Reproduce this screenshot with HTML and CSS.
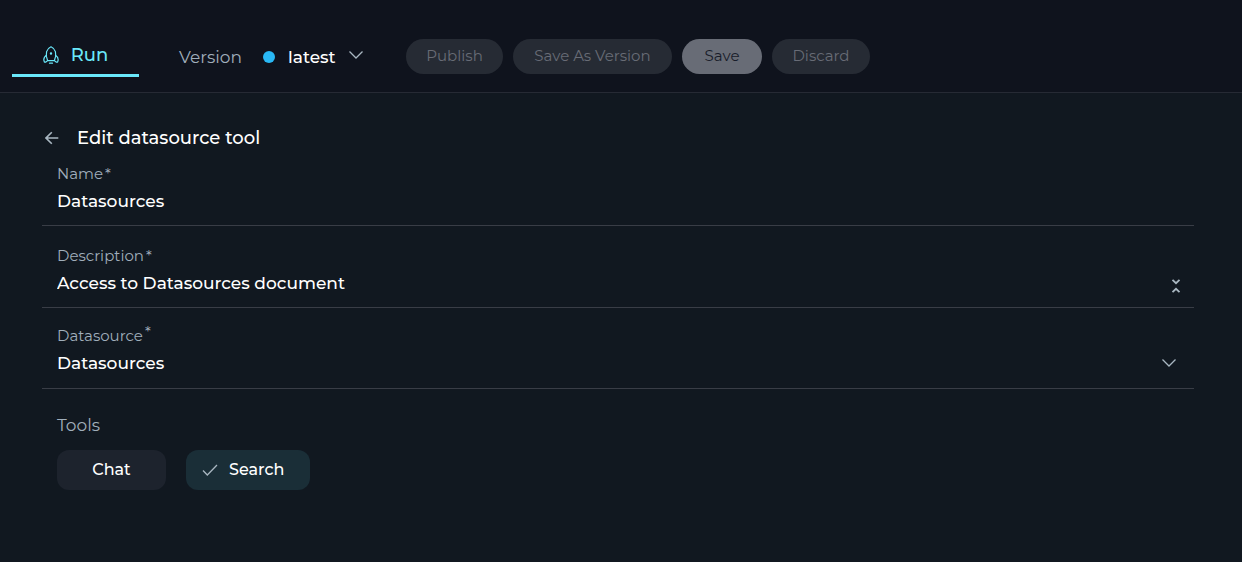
FILE: index.html
```html
<!DOCTYPE html>
<html lang="en">
<head>
<meta charset="utf-8">
<meta name="viewport" content="width=device-width, initial-scale=1">
<title>Edit datasource tool</title>
<link rel="stylesheet" href="styles.css">
</head>
<body>
<header class="topbar">
  <button class="tab" type="button" aria-current="page">
    <svg class="rocket" width="16" height="18" viewBox="0 0 16 18" fill="none" stroke="currentColor" stroke-width="1.2" stroke-linecap="round" stroke-linejoin="round" aria-hidden="true">
      <path d="M4.600 14.600C3.200 11.500 2.800 8.600 3.600 5.700 4.300 3.400 5.800 1.600 8 .7c2.200.9 3.700 2.700 4.400 5 .8 2.900.4 5.800-1 8.900z"/>
      <path d="M3.500 9.300C1.800 10.300.8 11.900.8 13.800l.6 2.400h1.200l2-1.600M12.500 9.300c1.700 1 2.700 2.600 2.700 4.500l-.6 2.400h-1.200l-2-1.600"/>
      <circle cx="8" cy="7.500" r=".6"/>
      <path d="M6.500 17.200h3"/>
    </svg>
    Run
  </button>
  <label class="version-label" for="version">Version</label>
  <span class="status-dot"></span>
  <div class="version-picker">
    <select id="version" class="version"><option>latest</option></select>
    <svg class="chevron" width="16" height="10" viewBox="0 0 16 10" aria-hidden="true"><path d="M1.500 1.500 8 8l6.500-6.500"/></svg>
  </div>
  <div class="actions">
    <button class="pill publish" type="button" disabled>Publish</button>
    <button class="pill save-as" type="button" disabled>Save As Version</button>
    <button class="pill save" type="button" disabled>Save</button>
    <button class="pill discard" type="button" disabled>Discard</button>
  </div>
</header>
<main class="content">
  <div class="heading">
    <button class="back" type="button" aria-label="Back">
      <svg width="14" height="14" viewBox="0 0 14 14" aria-hidden="true"><path d="M13.300 7H1M6.800 1.200 1 7l5.800 5.800"/></svg>
    </button>
    <h1 class="title">Edit datasource tool</h1>
  </div>
  <form class="form">
    <div class="field first">
      <label class="label" for="name">Name<span class="star">*</span></label>
      <input class="value" id="name" type="text" value="Datasources">
    </div>
    <div class="field">
      <label class="label" for="description">Description<span class="star">*</span></label>
      <div class="row">
        <textarea class="value" id="description" rows="1">Access to Datasources document</textarea>
        <button class="collapse" type="button" aria-label="Collapse">
          <svg width="10" height="14" viewBox="0 0 10 14" aria-hidden="true"><path d="M1.500.8 5 4.200 8.500.8M1.500 13.200 5 9.800l3.500 3.400"/></svg>
        </button>
      </div>
    </div>
    <div class="field last">
      <label class="label" for="datasource">Datasource<span class="star raised">*</span></label>
      <div class="row">
        <select class="value" id="datasource"><option>Datasources</option></select>
        <svg class="chevron" width="16" height="10" viewBox="0 0 16 10" aria-hidden="true"><path d="M1.500 1.500 8 8l6.500-6.500"/></svg>
      </div>
    </div>
    <section class="tools" aria-labelledby="tools-title">
      <h2 class="tools-title" id="tools-title">Tools</h2>
      <div class="chips">
        <button class="chip" type="button" aria-pressed="false">Chat</button>
        <button class="chip selected" type="button" aria-pressed="true">
          <svg width="16" height="12" viewBox="0 0 16 12" aria-hidden="true"><path d="M1 6.500 5.300 11 15 1"/></svg>
          Search
        </button>
      </div>
    </section>
  </form>
</main>
</body>
</html>
```
FILE: styles.css
```css
* {
  box-sizing: border-box;
}

body {
  margin: 0;
  min-height: 100vh;
  background: #111820;
  color: #fff;
  font: 500 17px/24px Montserrat, Inter, "Open Sans", sans-serif;
}

button,
input,
select,
textarea {
  margin: 0;
  padding: 0;
  border: 0;
  background: none;
  color: inherit;
  font: inherit;
  appearance: none;
}

svg {
  display: block;
  flex: none;
}

.topbar {
  display: flex;
  align-items: center;
  padding: 36px 12px 15px;
  border-bottom: 1px solid #262a34;
  background: #0f131d;
}

.tab {
  display: flex;
  align-items: center;
  justify-content: center;
  gap: 12px;
  width: 127px;
  height: 41px;
  border-bottom: 3px solid #6ae8fa;
  color: #6ae8fa;
  font-size: 18px;
}

.version-label {
  width: 64px;
  margin-left: 40px;
  color: #a0aebb;
  font-weight: 400;
}

.status-dot {
  width: 12px;
  height: 12px;
  margin: 0 13px 0 20px;
  border-radius: 50%;
  background: #29b8f5;
}

.version-picker {
  display: grid;
  align-items: center;
}

.version-picker > * {
  grid-area: 1 / 1;
}

.version {
  width: 76px;
  height: 24px;
}

.chevron {
  justify-self: end;
  pointer-events: none;
}

.version-picker .chevron {
  margin-bottom: 3px;
}

.chevron path,
.back path,
.collapse path,
.chip path {
  fill: none;
  stroke: #a9b7c1;
  stroke-width: 1.3;
}

.actions {
  display: flex;
  gap: 10px;
  margin-left: 42px;
}

.pill {
  height: 35px;
  padding-bottom: 2px;
  border-radius: 18px;
  background: #262b34;
  color: #686c76;
  font-size: 15px;
  font-weight: 400;
  white-space: nowrap;
}

.publish {
  width: 97px;
}

.save-as {
  width: 159px;
}

.save {
  width: 80px;
  background: #686c76;
  color: #181c2a;
}

.discard {
  width: 98px;
}

.content {
  padding: 33px 48px 40px 42px;
}

.heading {
  display: flex;
  align-items: center;
  gap: 18px;
  padding-left: 3px;
}

.back path {
  stroke-width: 1.6;
}

.title {
  margin: 0;
  font-size: 18px;
  font-weight: 500;
}

.field {
  display: flex;
  flex-direction: column;
  padding: 19px 15px 12px;
  border-bottom: 1px solid #393d46;
}

.first {
  padding-top: 13px;
}

.last {
  padding-top: 17px;
  padding-bottom: 13px;
}

.label {
  height: 22px;
  margin-bottom: 4px;
  color: #a0aebb;
  font-size: 15px;
  font-weight: 400;
  line-height: 22px;
}

.star {
  margin-left: 2px;
}

.raised {
  position: relative;
  top: -4px;
}

.value {
  width: 100%;
  height: 24px;
  overflow: hidden;
  resize: none;
}

.row {
  display: grid;
  align-items: center;
  height: 24px;
}

.row > * {
  grid-area: 1 / 1;
}

.row .chevron {
  margin-right: 2px;
}

.collapse {
  justify-self: end;
  margin-top: 6px;
  margin-right: -2px;
}

.collapse path {
  stroke-width: 1.8;
}

.tools {
  padding: 24px 15px 0;
}

.tools-title {
  margin: 0 0 13px;
  color: #a0aebb;
  font-size: 17px;
  font-weight: 400;
}

.chips {
  display: flex;
  gap: 20px;
}

.chip {
  display: flex;
  align-items: center;
  justify-content: center;
  gap: 11px;
  width: 109px;
  height: 40px;
  border-radius: 12px;
  background: #1d232d;
  font-size: 16px;
}

.selected {
  justify-content: flex-start;
  width: 124px;
  padding-left: 16px;
  background: #1a2e37;
}
```
